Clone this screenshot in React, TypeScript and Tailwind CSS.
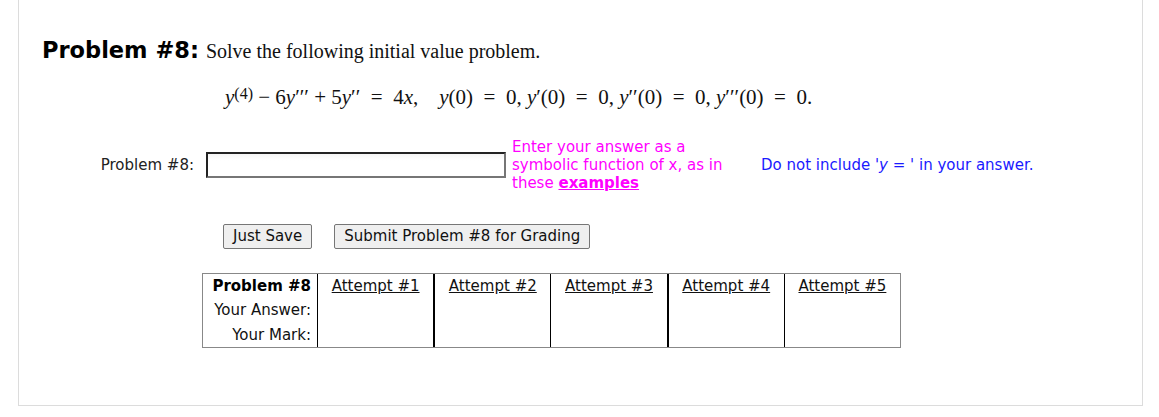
import React from 'react';

const verdana = { fontFamily: '"DejaVu Sans", Verdana, sans-serif' };

const attempts = ['Attempt #1', 'Attempt #2', 'Attempt #3', 'Attempt #4', 'Attempt #5'];

const Equation = () => (
  <div className="flex items-baseline whitespace-pre font-['Liberation_Serif',serif] text-[21px] leading-[26px] text-[#111]">
    <i>y</i>
    <sup className="relative -top-[5px] text-[16px] not-italic">(4)</sup>
    <span> − 6</span>
    <i>y</i>
    <span>′′′ + 5</span>
    <i>y</i>
    <span>′′  =  4</span>
    <i>x</i>
    <span>,    </span>
    <i>y</i>
    <span>(0)  =  0, </span>
    <i>y</i>
    <span>′(0)  =  0, </span>
    <i>y</i>
    <span>′′(0)  =  0, </span>
    <i>y</i>
    <span>′′′(0)  =  0.</span>
  </div>
);

export default function App() {
  return (
    <div className="h-[417px] w-[1159px] bg-white">
      <div className="ml-[18px] h-[406px] w-[1125px] border-x border-b border-[#dcdcdc] pl-[23px] pt-[34px]">
        <div className="flex items-baseline gap-[7px]">
          <span className="text-[22.5px] font-bold text-black" style={verdana}>
            Problem #8:
          </span>
          <span className="font-['Liberation_Serif',serif] text-[20px] text-[#111]">
            Solve the following initial value problem.
          </span>
        </div>

        <div className="mt-[16px] pl-[183px]">
          <Equation />
        </div>

        <div className="mt-[28px] flex items-center text-[15px]" style={verdana}>
          <span className="w-[152px] text-right text-[#222]">Problem #8:</span>
          <input
            type="text"
            className="ml-[12px] h-[26px] w-[300px] border-2 border-b-[#767676] border-l-[#222] border-r-[#767676] border-t-[#222] bg-[linear-gradient(#f4f4f4,#fff_30%)] outline-none"
          />
          <div className="ml-[6px] w-[236px] leading-[18px] text-[#ff00ff]">
            Enter your answer as a symbolic function of x, as in these{' '}
            <span className="font-bold underline">examples</span>
          </div>
          <div className="ml-[13px] text-[#1a1aff]">
            Do not include '<i>y</i> = ' in your answer.
          </div>
        </div>

        <div className="mt-[32px] flex gap-[22px] pl-[181px] text-[15px]" style={verdana}>
          <button
            type="button"
            className="h-[25px] rounded-[2px] border border-[#767676] bg-[#efefef] px-[9px] leading-[23px] text-[#111]"
          >
            Just Save
          </button>
          <button
            type="button"
            className="h-[25px] rounded-[2px] border border-[#767676] bg-[#efefef] px-[9px] leading-[23px] text-[#111]"
          >
            Submit Problem #8 for Grading
          </button>
        </div>

        <div className="ml-[160px] mt-[24px] w-[699px] border border-[#888]" style={verdana}>
          <div className="flex text-[15px] leading-[24.5px]">
            <div className="w-[115px] border-r border-black pr-[6px] text-right text-[#111]">
              <div className="font-bold text-black">Problem #8</div>
              <div>Your Answer:</div>
              <div>Your Mark:</div>
            </div>
            {attempts.map((label, index) => (
              <div
                key={label}
                className={`flex-1 text-center ${index < 4 ? 'border-r border-black' : ''} ${
                  index === 0 || index === 2 ? 'border-r-2' : ''
                }`}
              >
                <span className="text-[#111] underline">{label}</span>
              </div>
            ))}
          </div>
        </div>
      </div>
    </div>
  );
}
